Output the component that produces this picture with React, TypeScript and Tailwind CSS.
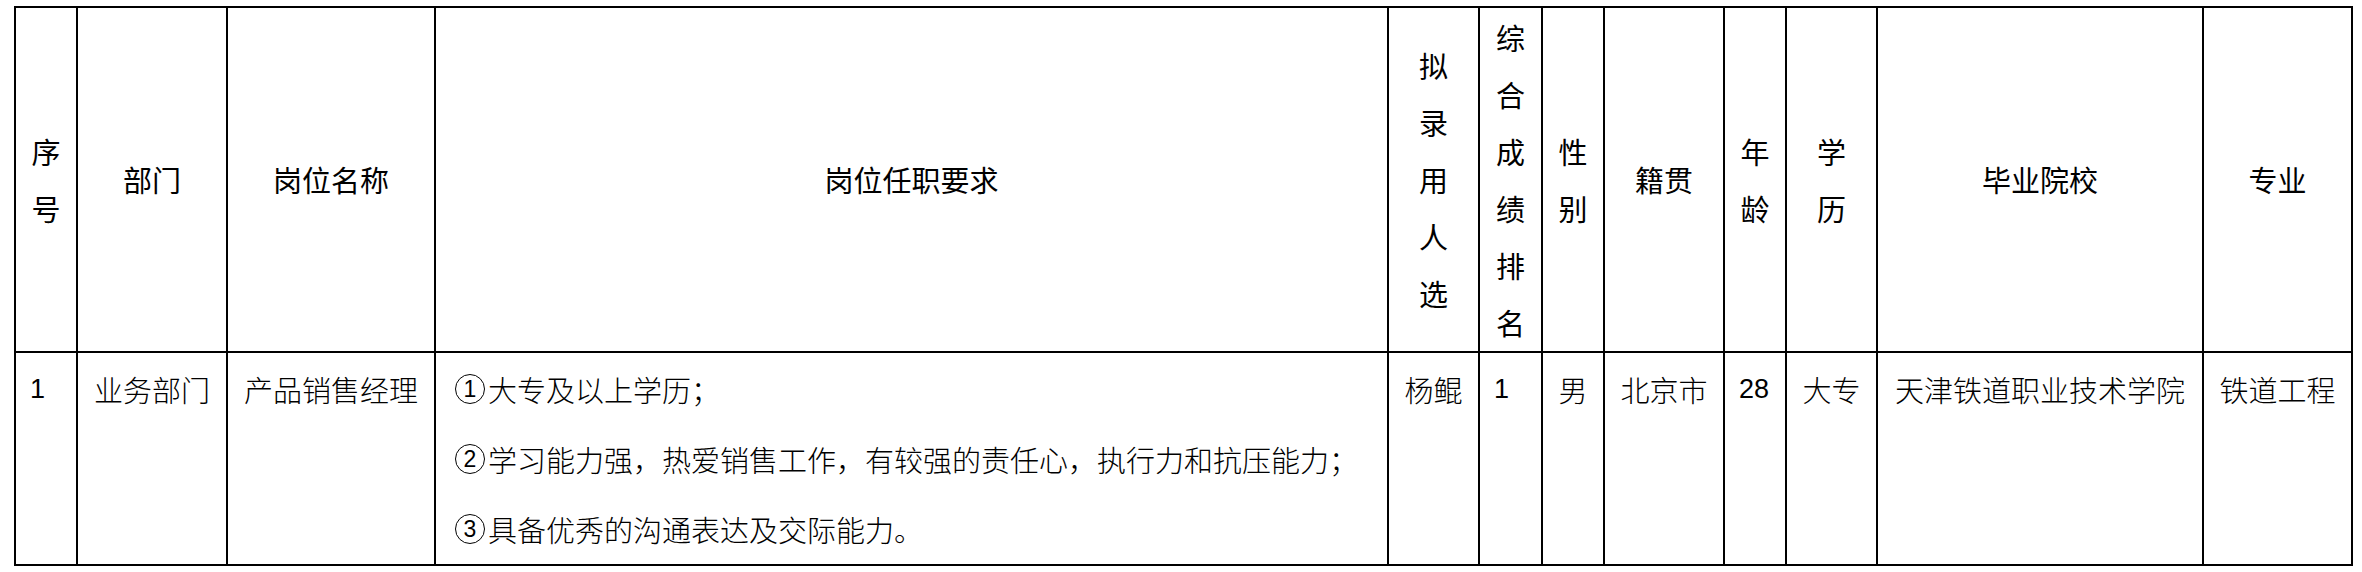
const CJK = "font-['Noto_Sans_CJK_SC',sans-serif]";

const headers: { label: string; vertical?: boolean }[] = [
  { label: "序号", vertical: true },
  { label: "部门" },
  { label: "岗位名称" },
  { label: "岗位任职要求" },
  { label: "拟录用人选", vertical: true },
  { label: "综合成绩排名", vertical: true },
  { label: "性别", vertical: true },
  { label: "籍贯" },
  { label: "年龄", vertical: true },
  { label: "学历", vertical: true },
  { label: "毕业院校" },
  { label: "专业" },
];

const requirements = [
  { num: "1", text: "大专及以上学历；" },
  { num: "2", text: "学习能力强，热爱销售工作，有较强的责任心，执行力和抗压能力；" },
  { num: "3", text: "具备优秀的沟通表达及交际能力。" },
];

const HeaderCell = ({ label, vertical }: { label: string; vertical?: boolean }) => (
  <div className="flex items-center justify-center bg-white text-black">
    {vertical ? (
      <div className="flex flex-col items-center">
        {label.split("").map((ch, i) => (
          <span key={i} className="leading-[57px]">
            {ch}
          </span>
        ))}
      </div>
    ) : (
      <span className="leading-[57px]">{label}</span>
    )}
  </div>
);

const NumCell = ({ value }: { value: string }) => (
  <div className="bg-white pt-[1px] pl-[14px] font-['Liberation_Sans',sans-serif] text-[27px] leading-[70px] text-black">
    {value}
  </div>
);

const TextCell = ({ value }: { value: string }) => (
  <div className="bg-white pt-[1px] text-center font-light leading-[70px] text-black">
    {value}
  </div>
);

export default function App() {
  return (
    <div className="min-h-[572px] w-[2362px] bg-white pt-[6px] pl-[14px]">
      <div
        className={`grid w-max grid-cols-[60px_148px_206px_951px_89px_61px_60px_118px_60px_89px_324px_147px] grid-rows-[343px_211px] gap-[2px] bg-black p-[2px] text-[29px] ${CJK}`}
      >
        {headers.map((h) => (
          <HeaderCell key={h.label} label={h.label} vertical={h.vertical} />
        ))}

        <NumCell value="1" />
        <TextCell value="业务部门" />
        <TextCell value="产品销售经理" />
        <div className="bg-white pt-[1px] pl-[19px] font-light leading-[70px] text-black">
          {requirements.map((r) => (
            <div key={r.num} className="flex items-center">
              <span className="mr-[3px] inline-flex h-[30px] w-[30px] items-center justify-center rounded-full border-[1.5px] border-black font-['Liberation_Sans',sans-serif] text-[23px] leading-none">
                {r.num}
              </span>
              <span>{r.text}</span>
            </div>
          ))}
        </div>
        <TextCell value="杨鲲" />
        <NumCell value="1" />
        <TextCell value="男" />
        <TextCell value="北京市" />
        <NumCell value="28" />
        <TextCell value="大专" />
        <TextCell value="天津铁道职业技术学院" />
        <TextCell value="铁道工程" />
      </div>
    </div>
  );
}
